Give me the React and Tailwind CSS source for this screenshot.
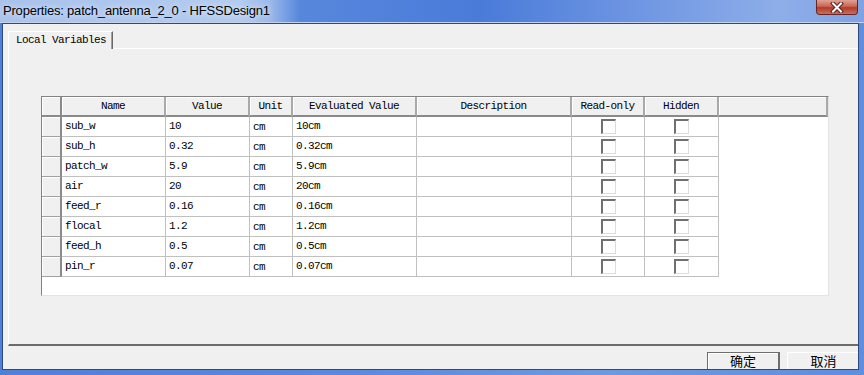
import React from 'react';

const rows = [
  ['sub_w', '10', 'cm', '10cm'],
  ['sub_h', '0.32', 'cm', '0.32cm'],
  ['patch_w', '5.9', 'cm', '5.9cm'],
  ['air', '20', 'cm', '20cm'],
  ['feed_r', '0.16', 'cm', '0.16cm'],
  ['flocal', '1.2', 'cm', '1.2cm'],
  ['feed_h', '0.5', 'cm', '0.5cm'],
  ['pin_r', '0.07', 'cm', '0.07cm'],
];

const headers = [
  { label: 'Name', w: 'w-[104px]' },
  { label: 'Value', w: 'w-[84px]' },
  { label: 'Unit', w: 'w-[43px]' },
  { label: 'Evaluated Value', w: 'w-[124px]' },
  { label: 'Description', w: 'w-[155px]' },
  { label: 'Read-only', w: 'w-[73px]' },
  { label: 'Hidden', w: 'w-[74px]' },
  { label: '', w: 'w-[109px]' },
];

const mono = "font-['Liberation_Mono',monospace] text-[11px] tracking-[-0.6px] text-black";

const Checkbox = () => (
  <div className="w-[15px] h-[15px] bg-white border-t-2 border-l-2 border-t-[#707070] border-l-[#707070] border-r border-b border-r-[#dcdcdc] border-b-[#dcdcdc]" />
);

const CloseIcon = () => (
  <svg width="14" height="11" viewBox="0 0 14 11">
    <path d="M3 1.5 L11 9.5 M11 1.5 L3 9.5" stroke="#5a2020" strokeWidth="4" strokeLinecap="square" />
    <path d="M3 1.5 L11 9.5 M11 1.5 L3 9.5" stroke="#ffffff" strokeWidth="2" strokeLinecap="square" />
  </svg>
);

const App = () => {
  return (
    <div className="relative w-[864px] h-[375px] overflow-hidden bg-[linear-gradient(90deg,#4f7fd9_0%,#5a89dd_40%,#6f98e2_70%,#5f8ddf_100%)]">
      {/* title bar */}
      <div className="relative h-[23px] border-b border-b-[#c3d3ee] bg-[linear-gradient(90deg,#a9c2ec_0px,#b3cbf0_240px,#9cb9ea_270px,#5787dc_300px,#4a7bd9_480px,#6f96e2_640px,#8eaee9_780px,#7ea2e4_864px)]">
        <span className="absolute left-[3px] top-[2px] font-['Liberation_Sans',sans-serif] text-[13px] tracking-[-0.2px] leading-[18px] text-black [text-shadow:0_0_6px_#ffffff]">
          Properties: patch_antenna_2_0 - HFSSDesign1
        </span>
        <div className="absolute right-[6px] top-0 w-[42px] h-[15px] rounded-b-[4px] border border-t-0 border-[#6b2424] bg-[linear-gradient(180deg,#dfa295_0%,#cc6453_45%,#b23a2a_55%,#c8705f_100%)] flex items-center justify-center">
          <CloseIcon />
        </div>
      </div>

      {/* client area */}
      <div className="ml-[2px] w-[857px] h-[347px] border border-[#2d4a78] bg-[#f0f0f0] overflow-hidden flex flex-col">
        <div className="h-[24px] pt-[7px] pl-[5px] flex shrink-0">
          <div className={`relative z-10 w-[105px] h-[18px] bg-[#f0f0f0] border-t border-l border-white border-r border-r-[#696969] shadow-[inset_-1px_0_0_#a0a0a0] pl-[7px] leading-[16px] ${mono}`}>
            Local Variables
          </div>
        </div>

        <div className="ml-[5px] w-[900px] h-[298px] shrink-0 border-t border-l border-white border-b-2 border-b-[#6b6b6b] pl-[32px] pt-[47px]">
          <div className={`w-[788px] h-[200px] flex flex-col bg-white border-l border-t border-[#828282] border-r border-b border-r-[#e3e3e3] border-b-[#e3e3e3] ${mono}`}>
            <div className="flex h-[20px] shrink-0">
              <div className="w-[20px] h-[20px] bg-[#f0f0f0] border-r-2 border-b-2 border-r-[#8a8a8a] border-b-[#8a8a8a] shadow-[inset_1px_1px_0_#ffffff]" />
              {headers.map((h, i) => (
                <div
                  key={i}
                  className={`${h.w} h-[20px] bg-[#f0f0f0] border-r-2 border-r-[#a9a9a9] border-b-2 border-b-[#8a8a8a] shadow-[inset_1px_1px_0_#ffffff] text-center leading-[18px] whitespace-nowrap`}
                >
                  {h.label}
                </div>
              ))}
            </div>
            {rows.map((r, i) => (
              <div key={i} className="flex h-[20px] shrink-0">
                <div className="w-[20px] h-[20px] bg-[#f0f0f0] border-r-2 border-r-[#8a8a8a] border-b border-b-[#a0a0a0] shadow-[inset_1px_1px_0_#ffffff]" />
                <div className="w-[104px] h-[20px] border-r border-b border-[#c0c0c0] px-[3px] leading-[19px]">{r[0]}</div>
                <div className="w-[84px] h-[20px] border-r border-b border-[#c0c0c0] px-[3px] leading-[19px]">{r[1]}</div>
                <div className="w-[43px] h-[20px] border-r border-b border-[#c0c0c0] px-[3px] pt-[1px] leading-[19px]">{r[2]}</div>
                <div className="w-[124px] h-[20px] border-r border-b border-[#c0c0c0] px-[3px] leading-[19px]">{r[3]}</div>
                <div className="w-[155px] h-[20px] border-r border-b border-[#c0c0c0]" />
                <div className="w-[73px] h-[20px] border-r border-b border-[#c0c0c0] flex justify-center pt-[2px]">
                  <Checkbox />
                </div>
                <div className="w-[74px] h-[20px] border-r border-b border-[#c0c0c0] flex justify-center pt-[2px]">
                  <Checkbox />
                </div>
              </div>
            ))}
          </div>
        </div>

        <div className="mt-[6px] pl-[704px] flex gap-[7px] shrink-0 font-['Noto_Sans_CJK_SC',sans-serif] text-[13px] text-black">
          <div className="w-[73px] h-[24px] shrink-0 bg-[#f0f0f0] border border-[#6e6e6e] border-r-2 border-b-2 shadow-[inset_1px_1px_0_#ffffff] text-center leading-[15px]">
            确定
          </div>
          <div className="w-[73px] h-[24px] shrink-0 bg-[#f0f0f0] border border-t-white border-l-white border-r-[#a0a0a0] border-b-[#a0a0a0] text-center leading-[15px]">
            取消
          </div>
        </div>
      </div>
    </div>
  );
};

export default App;
